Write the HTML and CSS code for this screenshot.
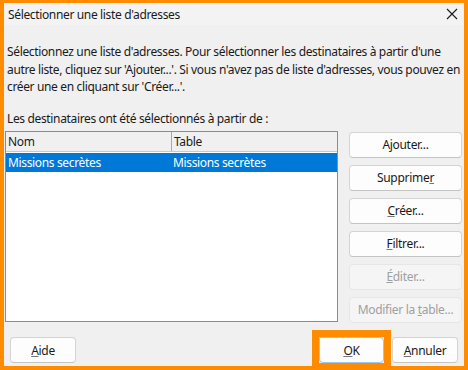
FILE: index.html
```html
<!DOCTYPE html>
<html lang="fr">
<head>
    <meta charset="UTF-8">
    <title>Sélectionner une liste d'adresses</title>
    <link rel="stylesheet" href="styles.css">
</head>
<body>
    <div class="dialog">
        <div class="titlebar">
            <span class="title">Sélectionner une liste d'adresses</span>
            <svg class="close" width="12" height="12" viewBox="0 0 12 12">
                <path d="M1 1 L11 11 M11 1 L1 11" stroke="#1a1a1a" stroke-width="1.1" fill="none"/>
            </svg>
        </div>

        <div class="content">
            <p class="intro">Sélectionnez une liste d'adresses. Pour sélectionner les destinataires à partir d'une<br>autre liste, cliquez sur 'Ajouter...'. Si vous n'avez pas de liste d'adresses, vous pouvez en<br>créer une en cliquant sur 'Créer...'.</p>
            <p class="label">Les destinataires ont été sélectionnés à partir de :</p>

            <div class="main">
                <div class="table">
                    <div class="row head">
                        <div class="cell">Nom</div>
                        <div class="cell">Table</div>
                    </div>
                    <div class="row selected">
                        <div class="cell">Missions secrètes</div>
                        <div class="cell">Missions secrètes</div>
                    </div>
                </div>
                <div class="side">
                    <button class="btn">A<u>j</u>outer...</button>
                    <button class="btn">Supprime<u>r</u></button>
                    <button class="btn"><u>C</u>réer...</button>
                    <button class="btn"><u>F</u>iltrer...</button>
                    <button class="btn" disabled><u>É</u>diter...</button>
                    <button class="btn" disabled>Modifier la <u>t</u>able...</button>
                </div>
            </div>
        </div>

        <div class="footer">
            <button class="btn small"><u>A</u>ide</button>
            <div class="actions">
                <div class="highlight">
                    <button class="btn small default"><u>O</u>K</button>
                </div>
                <button class="btn small"><u>A</u>nnuler</button>
            </div>
        </div>
    </div>
</body>
</html>
```

FILE: styles.css
```css
body {
    margin: 0;
    font-family: "Noto Sans", sans-serif;
    font-size: 12px;
    letter-spacing: -0.35px;
    color: #1a1a1a;
}
.dialog {
    width: 468px;
    height: 370px;
    box-sizing: border-box;
    border: solid #ff8c00;
    border-width: 3px 4px 4px 4px;
    background: #f0f0f0;
    display: flex;
    flex-direction: column;
}
.titlebar {
    height: 22px;
    display: flex;
    align-items: center;
    justify-content: space-between;
    padding: 0 6px 0 4px;
    background: #f3f3f3;
}
.close {
    display: block;
}
.content {
    padding: 0 2px 0 1px;
}
.intro {
    margin: 18px 0 0 2px;
    line-height: 17.5px;
    white-space: nowrap;
}
.label {
    margin: 14px 0 0 2px;
    line-height: 17px;
}
.main {
    display: flex;
    gap: 11px;
    margin-top: 4px;
}
.table {
    width: 333px;
    height: 191px;
    box-sizing: border-box;
    border: 1px solid #8c8c8c;
    background: #fff;
}
.row {
    display: grid;
    grid-template-columns: 165px 1fr;
    height: 19px;
    align-items: center;
}
.row .cell {
    padding-left: 2px;
    line-height: 19px;
    white-space: nowrap;
}
.head {
    background: #f0f0f0;
    border-bottom: 1px solid #c8c8c8;
}
.head .cell + .cell {
    border-left: 1px solid #a8a8a8;
}
.selected {
    background: #0078d7;
    color: #fff;
    margin-top: 1px;
}
.side {
    width: 113px;
    display: flex;
    flex-direction: column;
    gap: 7px;
    padding-top: 1px;
}
.btn {
    height: 26px;
    font-family: inherit;
    font-size: 12px;
    letter-spacing: -0.3px;
    color: #1a1a1a;
    background: #fdfdfd;
    border: 1px solid #d4d4d4;
    border-bottom-color: #c4c4c4;
    border-radius: 4px;
    padding: 0;
}
.btn u {
    text-decoration-color: #777;
}
.btn:disabled {
    background: #f5f5f5;
    border-color: #e6e6e6;
    color: #a0a0a0;
}
.btn:disabled u {
    text-decoration-color: #a0a0a0;
}
.footer {
    margin-top: auto;
    display: flex;
    justify-content: space-between;
    padding: 0 6px 3px 6px;
}
.actions {
    display: flex;
    gap: 8px;
}
.small {
    width: 66px;
}
.highlight {
    display: flex;
    border: 7px solid #ff8c00;
    margin: -7px;
    position: relative;
}
.default {
    width: 65px;
    border-color: #9cc7ec;
    border-radius: 0 4px 4px 4px;
}
```
